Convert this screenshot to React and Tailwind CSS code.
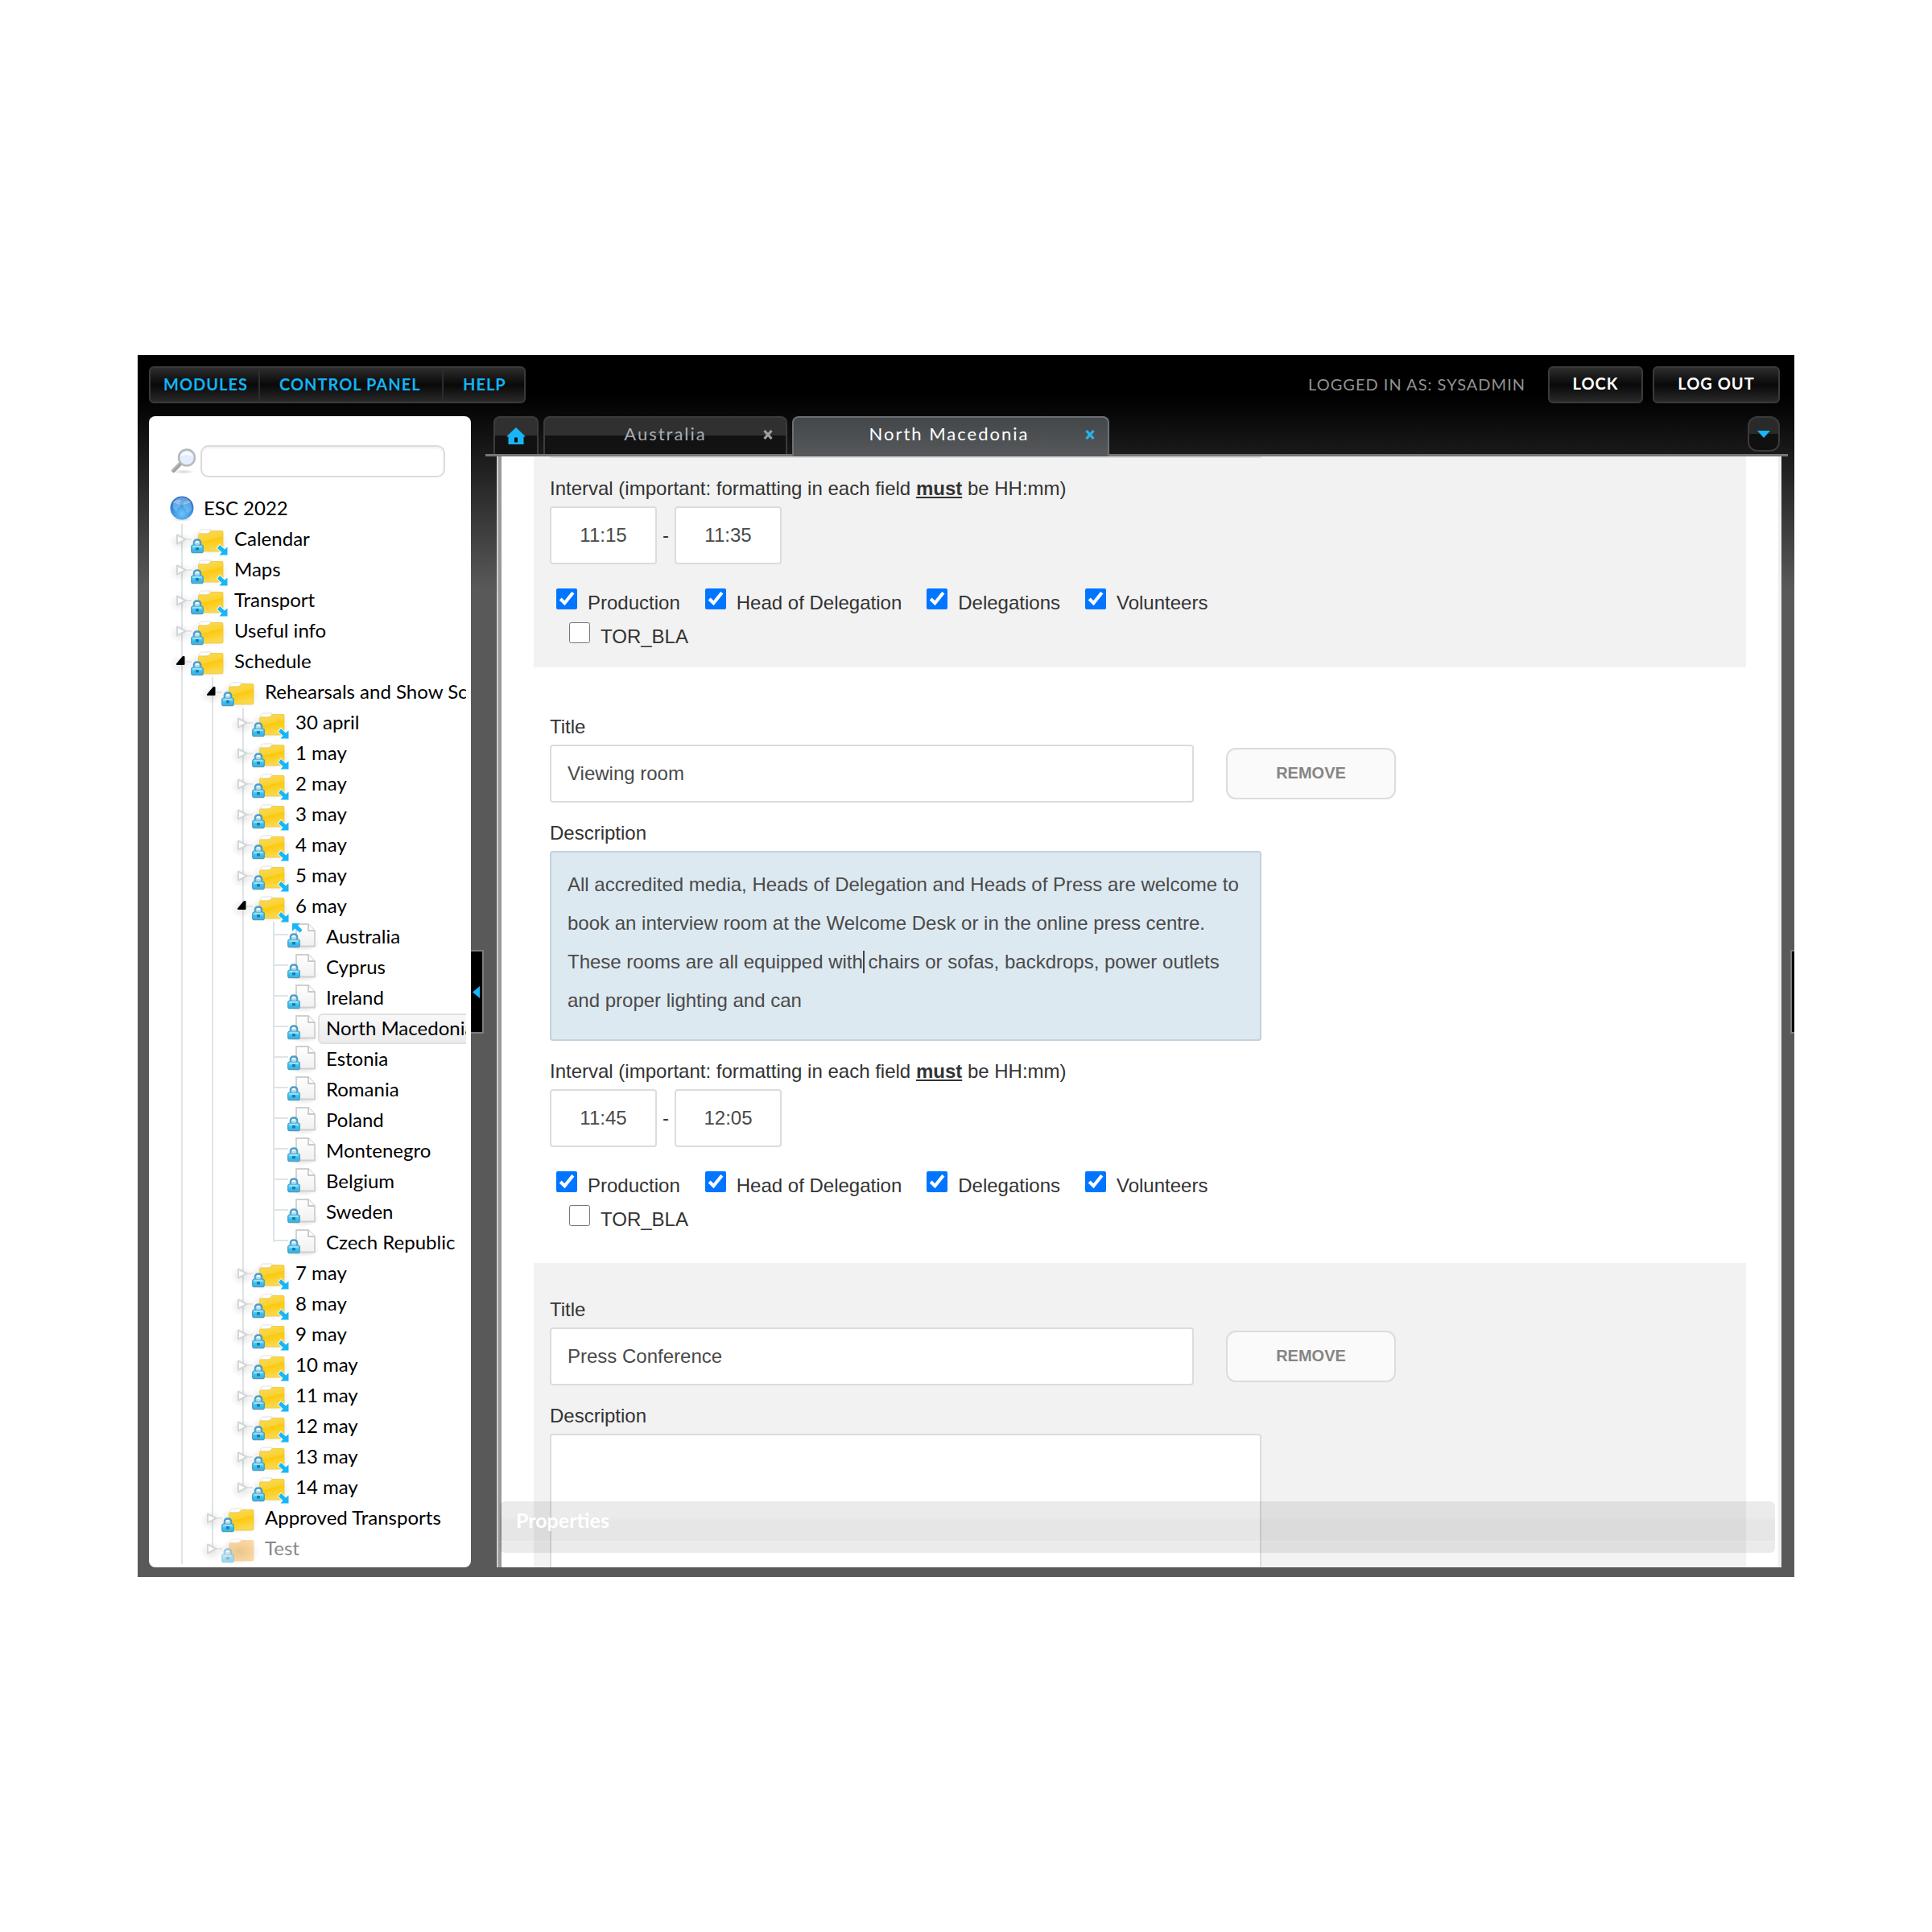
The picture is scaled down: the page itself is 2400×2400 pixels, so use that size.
import { Fragment } from "react";

const tree = [
  { label: "Calendar", depth: 1, protectedNode: true },
  { label: "Maps", depth: 1, protectedNode: true },
  { label: "Transport", depth: 1, protectedNode: true },
  { label: "Useful info", depth: 1 },
  { label: "Schedule", depth: 1, open: true },
  { label: "Rehearsals and Show Schedule", depth: 2, open: true },
  { label: "30 april", depth: 3, protectedNode: true },
  { label: "1 may", depth: 3, protectedNode: true },
  { label: "2 may", depth: 3, protectedNode: true },
  { label: "3 may", depth: 3, protectedNode: true },
  { label: "4 may", depth: 3, protectedNode: true },
  { label: "5 may", depth: 3, protectedNode: true },
  { label: "6 may", depth: 3, protectedNode: true, open: true },
  { label: "Australia", depth: 4, page: true, source: true },
  { label: "Cyprus", depth: 4, page: true },
  { label: "Ireland", depth: 4, page: true },
  { label: "North Macedonia", depth: 4, page: true, selected: true },
  { label: "Estonia", depth: 4, page: true },
  { label: "Romania", depth: 4, page: true },
  { label: "Poland", depth: 4, page: true },
  { label: "Montenegro", depth: 4, page: true },
  { label: "Belgium", depth: 4, page: true },
  { label: "Sweden", depth: 4, page: true },
  { label: "Czech Republic", depth: 4, page: true, last: true },
  { label: "7 may", depth: 3, protectedNode: true },
  { label: "8 may", depth: 3, protectedNode: true },
  { label: "9 may", depth: 3, protectedNode: true },
  { label: "10 may", depth: 3, protectedNode: true },
  { label: "11 may", depth: 3, protectedNode: true },
  { label: "12 may", depth: 3, protectedNode: true },
  { label: "13 may", depth: 3, protectedNode: true },
  { label: "14 may", depth: 3, protectedNode: true, last: true },
  { label: "Approved Transports", depth: 2 },
  { label: "Test", depth: 2, disabled: true, last: true },
];

const groups = [
  { name: "Production", checked: true },
  { name: "Head of Delegation", checked: true },
  { name: "Delegations", checked: true },
  { name: "Volunteers", checked: true },
  { name: "TOR_BLA", checked: false },
];

const viewingRoomText =
  "All accredited media, Heads of Delegation and Heads of Press are welcome to book an interview room at the Welcome Desk or in the online press centre. These rooms are all equipped with chairs or sofas, backdrops, power outlets and proper lighting and can";

// Gradients shared by all tree icons
const IconDefs = () => (
  <svg width="0" height="0" className="absolute" aria-hidden="true">
    <defs>
      <linearGradient id="folderFill" x1="0" y1="0" x2="0.3" y2="1">
        <stop offset="0" stopColor="#f8dc5c" />
        <stop offset="0.5" stopColor="#fbd234" />
        <stop offset="0.55" stopColor="#fcc90c" />
        <stop offset="1" stopColor="#fbd84c" />
      </linearGradient>
      <linearGradient id="lockFill" x1="0" y1="0" x2="0" y2="1">
        <stop offset="0" stopColor="#7fdcf8" />
        <stop offset="0.6" stopColor="#2fc0f4" />
        <stop offset="1" stopColor="#59a9cf" />
      </linearGradient>
      <linearGradient id="pageFill" x1="0" y1="0" x2="0" y2="1">
        <stop offset="0" stopColor="#ffffff" />
        <stop offset="1" stopColor="#f0f0f0" />
      </linearGradient>
      <radialGradient id="softShadow">
        <stop offset="0" stopColor="#000" stopOpacity="0.16" />
        <stop offset="1" stopColor="#000" stopOpacity="0" />
      </radialGradient>
      <radialGradient id="globeFill" cx="0.5" cy="0.75" r="0.75">
        <stop offset="0" stopColor="#6fc4fb" />
        <stop offset="0.5" stopColor="#3c97e3" />
        <stop offset="1" stopColor="#2366bd" />
      </radialGradient>
      <linearGradient id="handleFill" x1="0" y1="0" x2="1" y2="1">
        <stop offset="0" stopColor="#d8d8d8" />
        <stop offset="1" stopColor="#7d7d7d" />
      </linearGradient>
    </defs>
  </svg>
);

const Lock = ({ x, y }) => (
  <g transform={`translate(${x} ${y})`}>
    <path d="M4 9V5Q4 1.5 8 1.5T12 5V9" fill="#fff" stroke="#4d9fc8" strokeWidth="2.6" />
    <path d="M4.5 6H11.5" stroke="#8fd3ee" strokeWidth="1.4" />
    <rect x="0.7" y="8" width="14.6" height="9.6" rx="2.2" fill="url(#lockFill)" stroke="#4a9cc4" strokeWidth="1.2" />
    <path d="M2.5 10H13.5" stroke="#a6e8fb" strokeWidth="1.4" />
    <rect x="6" y="11" width="4" height="3.6" rx="1" fill="#1c7ca8" />
  </g>
);

const NodeIcon = ({ node }) => {
  const { page, open, last, protectedNode, source, disabled } = node;
  return (
    <svg width="74" height="38" viewBox="0 0 74 38" className="shrink-0 overflow-visible" aria-hidden="true">
      <path d={last ? "M19 0V18" : "M19 0V38"} stroke="#dfe4e6" strokeWidth="2" />
      {page ? (
        <g>
          <path d="M20 16H37" stroke="#dfe4e6" strokeWidth="2" />
          <ellipse cx="56" cy="27" rx="20" ry="10" fill="url(#softShadow)" />
          <path d="M47 3H62L70 11V30.5H47Z" fill="url(#pageFill)" stroke="#cfcfcf" strokeWidth="1.8" />
          <path d="M62 3V11H70" fill="#fff" stroke="#c9c9c9" strokeWidth="1.8" />
          <Lock x={36} y={14} />
          {source && <path d="M42 2H51.500L49 4.500L54.500 10.500L51.500 13.500L45.500 8.500L42 12Z" fill="#18b6f6" />}
        </g>
      ) : (
        <g>
          <ellipse cx="52" cy="22" rx="26" ry="17" fill="url(#softShadow)" />
          <ellipse cx="18" cy="22" rx="15" ry="12" fill="url(#softShadow)" opacity="0.6" />
          <path d="M23 19H31" stroke="#dfe4e6" strokeWidth="2" />
          {open ? (
            <path d="M12.500 21.500L20 12.500H22V22.500H12.500Z" fill="#000" stroke="#000" strokeLinejoin="round" />
          ) : (
            <path d="M13 13.500L23.500 19L13 24.500Z" fill="#fff" stroke="#d3d7d7" strokeWidth="2" strokeLinejoin="round" />
          )}
          <g opacity={disabled ? 0.5 : 1}>
            <path d="M41 9L43 7H55L54 12H41Z" fill="#fff" stroke="#e2e2e2" strokeWidth="1" />
            <path
              d="M39.500 13Q39.500 12 41 12H50Q52 12 53.500 10T56.500 8.500H69Q70 8.500 70 10V32.500Q70 34 68.500 34H41Q39.500 34 39.500 32.500Z"
              fill={disabled ? "#ffb84a" : "url(#folderFill)"}
              stroke={disabled ? "#f5b050" : "#ecc63a"}
              strokeWidth="0.8"
            />
            <Lock x={30} y={18} />
          </g>
          {protectedNode && (
            <path
              d="M66 26L72 31.500L75.500 28.500V38.500H65.500L68.500 35L63 30Z"
              fill="#18b6f6"
              stroke="#fff"
              strokeWidth="1.6"
              paintOrder="stroke"
            />
          )}
        </g>
      )}
    </svg>
  );
};

const TreeRow = ({ node }) => (
  <li className="flex h-[38px] items-center">
    {Array.from({ length: node.depth - 1 }, (_, i) => (
      <span key={i} className="flex h-full w-[38px] shrink-0 justify-center">
        <span className="w-0.5 bg-[#dfe4e6]" />
      </span>
    ))}
    <NodeIcon node={node} />
    <a
      href="#"
      className={`flex h-full flex-1 items-center rounded-l-md border-y-2 border-l-2 pb-0.5 pl-2 ${
        node.selected ? "border-[#e0e0e0] bg-gradient-to-b from-[#f8f8f8] to-[#ececec]" : "border-transparent"
      } ${node.disabled ? "text-[#888]" : "text-black"}`}
    >
      {node.label}
    </a>
  </li>
);

const Sidebar = () => (
  <aside className="w-[400px] shrink-0 overflow-hidden rounded-lg bg-white">
    <div className="mr-1.5 overflow-hidden pt-9 text-2xl whitespace-nowrap">
      <div className="flex items-center gap-1.5 pr-[26px] pl-7">
        <svg width="30" height="32" viewBox="0 0 30 32" aria-hidden="true">
          <ellipse cx="15" cy="29" rx="14" ry="3" fill="url(#softShadow)" />
          <path d="M11 19L2.500 27.500" stroke="url(#handleFill)" strokeWidth="5" strokeLinecap="round" />
          <circle cx="19" cy="11.500" r="10" fill="#e3edfb" stroke="#b5b8bd" strokeWidth="2.4" />
          <path d="M11.500 10Q19 6 26.500 10Q25 4 19 4T11.500 10Z" fill="#f7faff" />
        </svg>
        <input
          type="text"
          aria-label="Search"
          className="h-10 min-w-0 flex-1 rounded-[10px] border-2 border-[#dcdcdc] bg-white px-3 shadow-[inset_0_2px_3px_#f0f0f0] outline-none"
        />
      </div>
      <div className="mt-5 flex h-[38px] items-center gap-3 pl-[26px]">
        <svg width="30" height="32" viewBox="0 0 30 32" aria-hidden="true">
          <ellipse cx="15" cy="29" rx="14" ry="3" fill="url(#softShadow)" />
          <circle cx="15" cy="15" r="14.500" fill="url(#globeFill)" />
          <path d="M4 8Q9 3 14 5L12 9L14 12L10 15L8 20L4 15Z" fill="#9fd3fb" opacity="0.45" />
          <path d="M18 7L24 6Q28 11 27 18L22 22L19 16L16 13Z" fill="#9fd3fb" opacity="0.4" />
          <path d="M4 8Q9 1.500 15 1.500T26 8Q20 11 15 11T4 8Z" fill="#fff" opacity="0.3" />
        </svg>
        <a href="#" className="pb-0.5 text-black">ESC 2022</a>
      </div>
      <ul className="pl-[22px]">
        {tree.map((node) => (
          <TreeRow key={node.label} node={node} />
        ))}
      </ul>
    </div>
  </aside>
);

const Header = () => (
  <header className="flex items-center justify-between pr-[18px] text-[20px] tracking-[1px]">
    <nav className="flex h-[46px] overflow-hidden rounded-md border-2 border-[#3a3a3a] bg-gradient-to-b from-[#2e2e2e] via-[#090909] to-[#2a2a2a] font-bold text-[#12b4f5]">
      <a href="#" className="flex w-[136px] items-center border-r-2 border-[#2c2c2c] pb-0.5 pl-4">MODULES</a>
      <a href="#" className="flex w-[228px] items-center border-r-2 border-[#2c2c2c] pb-0.5 pl-6">CONTROL PANEL</a>
      <a href="#" className="flex w-[100px] items-center pb-0.5 pl-6">HELP</a>
    </nav>
    <div className="flex items-center gap-3 font-bold text-white">
      <span className="mr-4 pb-0.5 font-normal text-[#929292]">LOGGED IN AS: SYSADMIN</span>
      <button className="h-[46px] w-[118px] rounded-md border-2 border-[#3a3a3a] bg-gradient-to-b from-[#2e2e2e] via-[#090909] to-[#2a2a2a] pb-1">
        LOCK
      </button>
      <button className="h-[46px] w-[158px] rounded-md border-2 border-[#3a3a3a] bg-gradient-to-b from-[#2e2e2e] via-[#090909] to-[#2a2a2a] pb-1">
        LOG OUT
      </button>
    </div>
  </header>
);

const CloseIcon = ({ color }) => (
  <svg width="12" height="12" viewBox="0 0 12 12" aria-hidden="true">
    <path d="M1.500 1L10.500 11M10.500 1L1.500 11" stroke={color} strokeWidth="3.2" />
  </svg>
);

const Tabs = () => (
  <div className="flex h-[50px] items-stretch gap-1.5 border-b-3 border-[#777] pl-2.5 text-[22px] tracking-[2px]">
    <button
      aria-label="Home"
      className="flex w-14 items-center justify-center rounded-t-lg border-x-2 border-t-2 border-[#3c3c3c] bg-gradient-to-b from-[#303030] from-50% to-[#121212] to-50%"
    >
      <svg width="24" height="21" viewBox="0 0 24 21" aria-hidden="true">
        <path d="M12 0L24 11.500H21.500V21H2.500V11.500H0Z" fill="#18b6f6" />
        <rect x="10" y="12.500" width="4" height="6" fill="#111" />
      </svg>
    </button>
    <div className="flex w-[303px] items-center rounded-t-lg border-x-2 border-t-2 border-[#3c3c3c] bg-gradient-to-b from-[#303030] from-50% to-[#121212] to-50% pr-4 pb-1 text-[#a5acb5]">
      <a href="#" className="flex-1 pb-0.5 pl-7 text-center">Australia</a>
      <button aria-label="Close Australia">
        <CloseIcon color="#a0a0a0" />
      </button>
    </div>
    <div className="-mb-[3px] flex w-[394px] items-center rounded-t-lg border-x-2 border-t-2 border-[#6c7073] bg-gradient-to-b from-[#43474a] to-[#57595b] pr-4 pb-[7px] text-white">
      <a href="#" className="flex-1 pb-0.5 pl-6 text-center">North Macedonia</a>
      <button aria-label="Close North Macedonia">
        <CloseIcon color="#27b3ee" />
      </button>
    </div>
    <button
      aria-label="All tabs"
      className="mr-2.5 ml-auto flex h-11 w-10 items-center justify-center rounded-xl border-2 border-[#3a3a3a] bg-gradient-to-b from-[#2a2a2a] from-50% to-[#101010] to-50%"
    >
      <svg width="16" height="9" viewBox="0 0 16 9" aria-hidden="true">
        <path d="M0 0H16L8 9Z" fill="#18b6f6" />
      </svg>
    </button>
  </div>
);

const TitleField = ({ id, title }) => (
  <>
    <label htmlFor={`${id}-title`} className="block leading-9">Title</label>
    <div className="mt-1 flex items-center gap-10">
      <input
        id={`${id}-title`}
        type="text"
        defaultValue={title}
        className="h-[72px] w-[800px] rounded border-2 border-[#dcdcdc] bg-white px-5 text-[#4a4a4a] outline-none"
      />
      <button className="h-16 w-[211px] rounded-xl border-2 border-[#dcdcdc] bg-[#fafafa] pb-0.5 text-[20px] font-bold text-[#858585]">
        REMOVE
      </button>
    </div>
  </>
);

const DescriptionField = ({ id, text, focused }) => (
  <div className="mt-5">
    <label htmlFor={`${id}-description`} className="block leading-9">Description</label>
    <div className="relative mt-1 w-[884px]">
      <textarea
        id={`${id}-description`}
        defaultValue={text}
        className={`block h-[236px] w-full resize-none overflow-hidden rounded border-2 px-5 py-4 leading-[48px] text-[#4a4a4a] outline-none ${
          focused ? "border-[#c3d1da] bg-[#dde9f1]" : "border-[#dcdcdc] bg-white"
        }`}
      />
      {focused && <span className="absolute top-31 left-[389px] h-7 w-0.5 bg-[#444]" />}
    </div>
  </div>
);

const IntervalField = ({ id, from, to }) => (
  <>
    <p className="mt-5 leading-9">
      Interval (important: formatting in each field <b className="underline">must</b> be HH:mm)
    </p>
    <div className="mt-1 flex items-center gap-[7px]">
      <input
        type="text"
        aria-label="From"
        defaultValue={from}
        className="h-[72px] w-[133px] rounded border-2 border-[#dcdcdc] bg-white text-center text-[#4a4a4a] outline-none"
      />
      <span>-</span>
      <input
        type="text"
        aria-label="To"
        defaultValue={to}
        className="h-[72px] w-[133px] rounded border-2 border-[#dcdcdc] bg-white text-center text-[#4a4a4a] outline-none"
      />
    </div>
    <div className="mt-[30px] flex max-w-[884px] flex-wrap gap-x-[31px] gap-y-1 pl-2">
      {groups.map((g) => (
        <Fragment key={g.name}>
          {!g.checked && <span className="h-0 w-full" />}
          <label
            htmlFor={`${id}-${g.name}`}
            className={`flex h-[34px] items-start gap-[13px] ${g.checked ? "" : "pl-4"}`}
          >
            <input
              id={`${id}-${g.name}`}
              type="checkbox"
              defaultChecked={g.checked}
              className="size-[26px] accent-[#0075ff]"
            />
            <span className="pt-1 leading-7">{g.name}</span>
          </label>
        </Fragment>
      ))}
    </div>
  </>
);

const Editor = () => (
  <div className="relative mr-2 ml-3.5 min-h-0 flex-1 overflow-hidden border-r-4 border-l-2 border-r-[#eee] border-l-[#ccc] bg-white pr-10 pl-11 font-['Liberation_Sans',Arial,sans-serif] text-2xl text-[#333] shadow-[inset_4px_0_#999]">
    <section className="bg-[#f2f2f2] px-5 pb-[22px]">
      <div className="h-0.5 w-[884px] rounded-b bg-[#dcdcdc]" />
      <IntervalField id="first" from="11:15" to="11:35" />
    </section>

    <section className="mt-4 px-5 pt-10 pb-[22px]">
      <TitleField id="viewing" title="Viewing room" />
      <DescriptionField id="viewing" text={viewingRoomText} focused />
      <IntervalField id="viewing" from="11:45" to="12:05" />
    </section>

    <section className="mt-4 bg-[#f2f2f2] px-5 pt-10 pb-[22px]">
      <TitleField id="press" title="Press Conference" />
      <DescriptionField id="press" text="" />
    </section>

    {/* Collapsed properties panel floating over the form */}
    <button className="absolute right-1 bottom-[18px] left-0.5 flex h-16 flex-col rounded-md bg-black/8 text-left text-[25px] font-['Lato',sans-serif] text-white">
      <span className="block h-[50px] w-full border-b border-white/20 bg-gradient-to-b from-transparent from-40% to-black/2 to-50% pl-5 leading-[46px] font-bold">
        Properties
      </span>
    </button>
  </div>
);

const App = () => {
  return (
    <div className="h-screen bg-white px-[171px] py-[441px] font-['Lato',sans-serif]">
      <IconDefs />
      <div className="flex h-full flex-col bg-[#595959] bg-[linear-gradient(#000_0,#000_50px,#1b1b1b_126px,#595959_290px)] pt-3.5 pb-3 pl-3.5">
        <Header />
        <div className="mt-4 flex min-h-0 flex-1">
          <Sidebar />
          <div className="flex w-[18px] shrink-0 items-center">
            <button
              aria-label="Collapse sidebar"
              className="flex h-[104px] w-4 items-center justify-start border-y-2 border-r-2 border-[#7d7d7d] bg-black pl-0.5"
            >
              <svg width="9" height="15" viewBox="0 0 9 15" aria-hidden="true">
                <path d="M9 0V15L0 7.500Z" fill="#18b6f6" />
              </svg>
            </button>
          </div>
          <main className="flex min-w-0 flex-1 flex-col">
            <Tabs />
            <Editor />
          </main>
          <div className="flex w-2 shrink-0 items-center justify-end">
            <button
              aria-label="Expand panel"
              className="h-[104px] w-[5px] border-y-2 border-l-2 border-[#7d7d7d] bg-black"
            />
          </div>
        </div>
      </div>
    </div>
  );
};

export default App;
